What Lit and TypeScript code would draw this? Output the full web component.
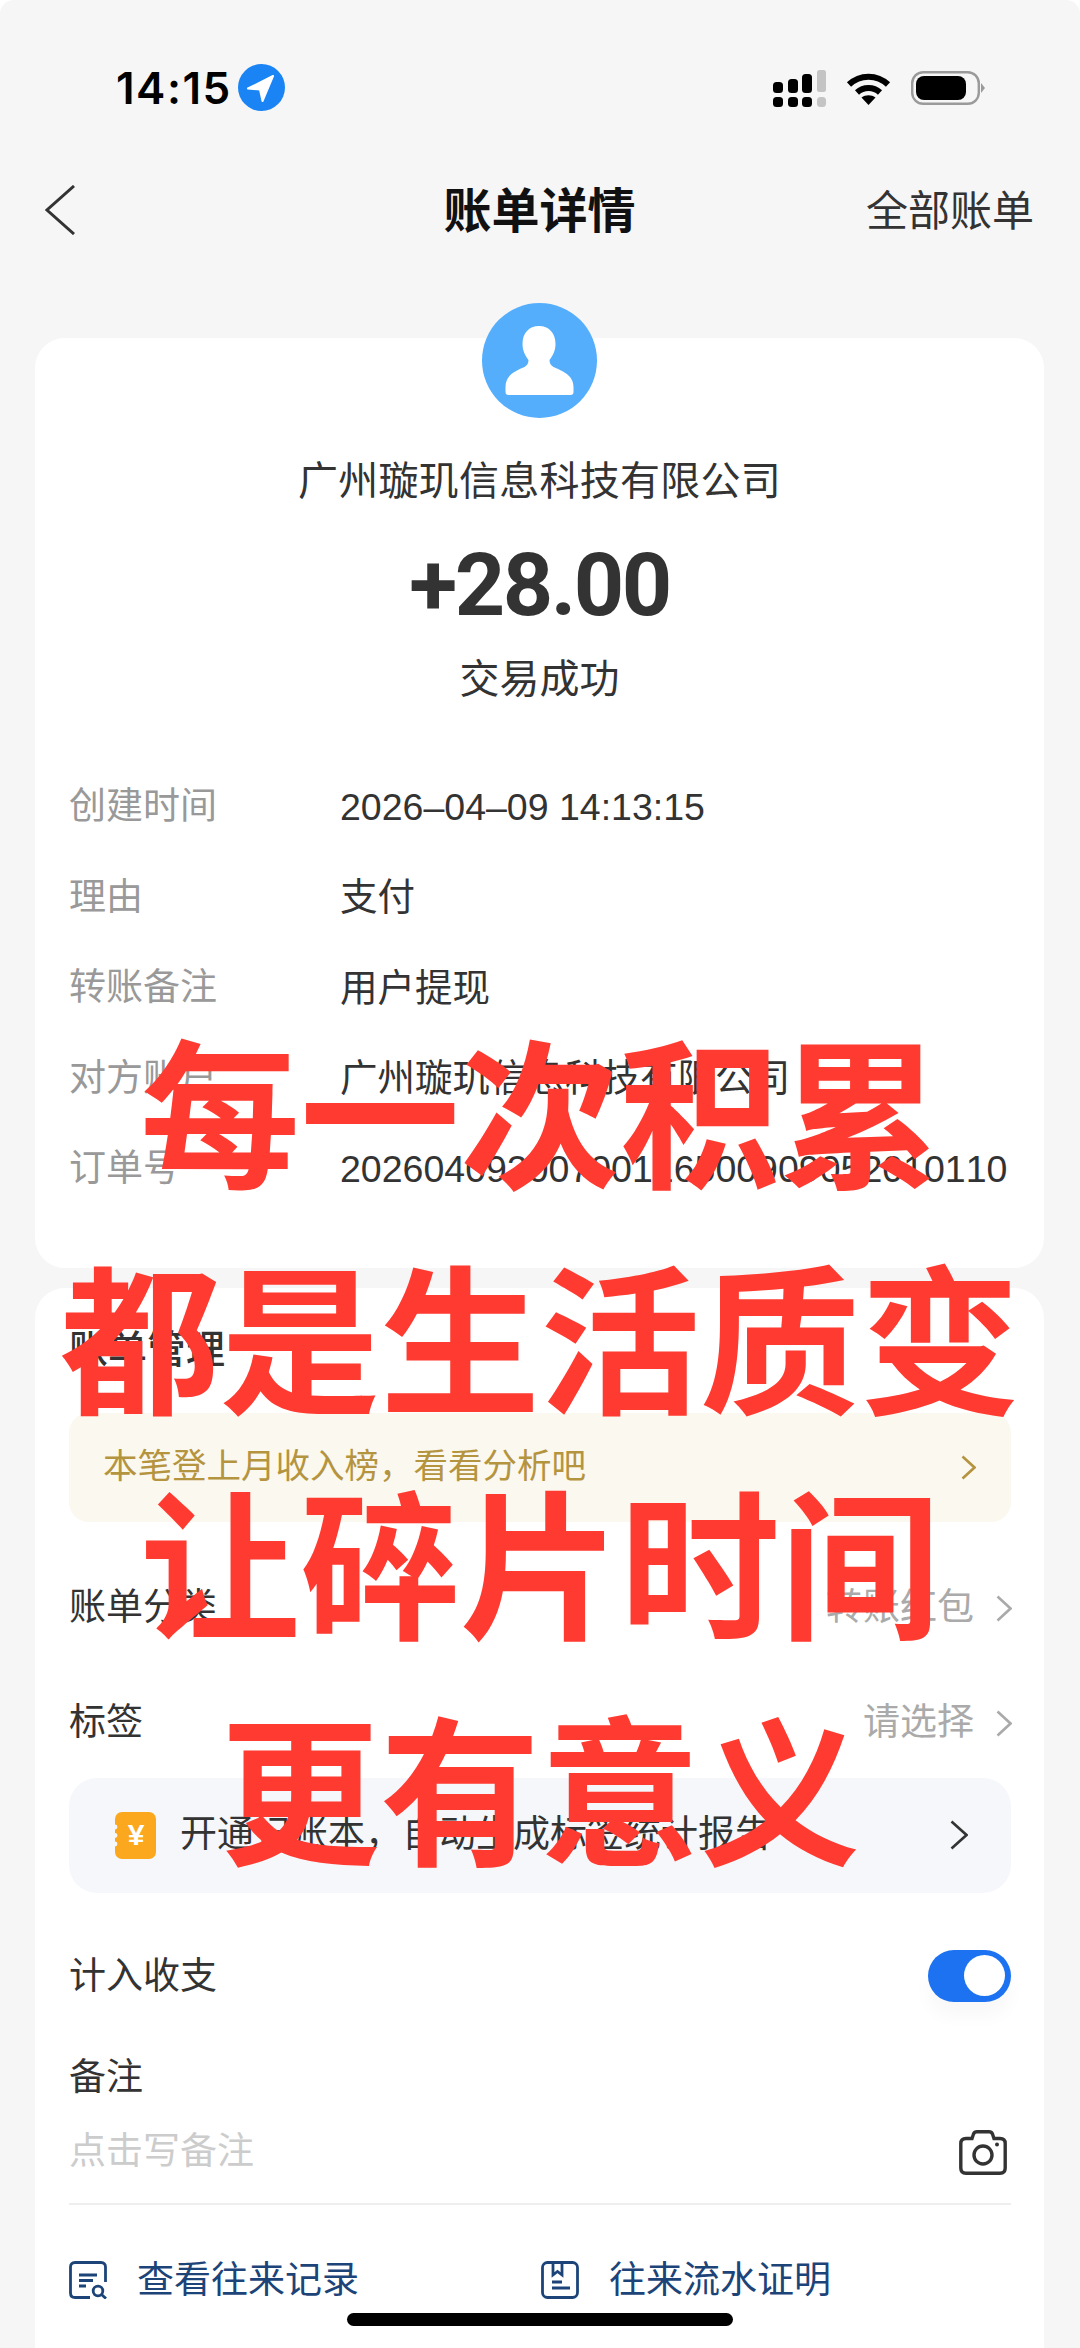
import { LitElement, css, html, svg } from 'lit'
import { customElement } from 'lit/decorators.js'

const details = [
  ['创建时间', '2026–04–09 14:13:15'],
  ['理由', '支付'],
  ['转账备注', '用户提现'],
  ['对方账户', '广州璇玑信息科技有限公司'],
  ['订单号', '20260409200700116500909052010110'],
]

const overlayLines = ['每一次积累', '都是生活质变', '让碎片时间', '更有意义']

const chevron = (w: number, h: number, cls: string) => html`
  <svg class="chev ${cls}" width=${w} height=${h} viewBox="0 0 ${w} ${h}" fill="none">
    <path d="M1.5 1.5 L${w - 1.5} ${h / 2} L1.5 ${h - 1.5}" stroke="currentColor" stroke-width="2.6" />
  </svg>
`

const signal = svg`
  <rect x="0" y="27" width="10" height="10" rx="3.5" fill="#000" />
  <rect x="15" y="27" width="10" height="10" rx="3.5" fill="#000" />
  <rect x="29" y="27" width="10" height="10" rx="3.5" fill="#000" />
  <rect x="44" y="27" width="9" height="10" rx="3.5" fill="#c4c4c4" />
  <rect x="0" y="12" width="10" height="11" rx="3.5" fill="#000" />
  <rect x="15" y="9" width="10" height="14" rx="3.5" fill="#000" />
  <rect x="29" y="4" width="10" height="19" rx="3.5" fill="#000" />
  <rect x="44" y="0" width="9" height="22" rx="2.5" fill="#c4c4c4" />
`

@customElement('app-root')
export class AppRoot extends LitElement {
  render() {
    return html`
      <div class="page">
        <div class="status">
          <div class="clock">
            <span class="time">14:15</span>
            <svg width="47" height="47" viewBox="0 0 47 47">
              <circle cx="23.5" cy="23.5" r="23.5" fill="#1a84f4" />
              <path d="M35 12 L10 24.5 L22 25.5 L24.5 37 Z" fill="#fff" stroke="#fff" stroke-width="2" stroke-linejoin="round" />
            </svg>
          </div>
          <div class="sys">
            <svg width="53" height="37" viewBox="0 0 53 37">${signal}</svg>
            <svg class="wifi" width="45" height="33" viewBox="0 0 45 33" fill="none">
              <path d="M3 12.5 C14 2 31 2 42 12.5" stroke="#000" stroke-width="6" />
              <path d="M11 20.5 C17.5 14.5 27.5 14.5 34 20.5" stroke="#000" stroke-width="6" />
              <path d="M22.5 33 L15.5 25.5 C19.5 22.5 25.5 22.5 29.5 25.5 Z" fill="#000" />
            </svg>
            <svg class="batt" width="74" height="34" viewBox="0 0 74 34">
              <rect x="1.2" y="1.2" width="66.6" height="31.6" rx="11" fill="none" stroke="#9a9a9a" stroke-width="2.4" />
              <rect x="5" y="5" width="50" height="24" rx="8" fill="#000" />
              <path d="M70 12 L74 17 L70 22 Z" fill="#9a9a9a" />
            </svg>
          </div>
        </div>

        <div class="nav">
          <svg class="back" width="30" height="50" viewBox="0 0 30 50" fill="none">
            <path d="M29 1 L2 25 L29 49" stroke="#333" stroke-width="3" />
          </svg>
          <div class="title">账单详情</div>
          <div class="all">全部账单</div>
        </div>

        <section class="card summary">
          <svg class="avatar" width="115" height="115" viewBox="0 0 115 115">
            <circle cx="57.5" cy="57.5" r="57.5" fill="#55aefc" />
            <path fill="#fff" d="M57 23 C67 23 73.500 30 73.500 41 C73.500 48 70.500 53 67.500 57 C67.500 60 68.500 62 71.500 64 C80.500 68 91.500 72 91.500 84 L91.500 89 Q91.500 92 88.500 92 L26.500 92 Q23.500 92 23.500 89 L23.500 84 C23.500 72 33.500 68 42.500 64 C45.500 62 46.500 60 46.500 57 C43.500 53 40.500 48 40.500 41 C40.500 30 47 23 57 23 Z" />
          </svg>
          <div class="payee">广州璇玑信息科技有限公司</div>
          <div class="amount">+28.00</div>
          <div class="result">交易成功</div>
          <div class="details">
            ${details.map(([k, v]) => html`
              <div class="detail"><span class="key">${k}</span><span class="val">${v}</span></div>
            `)}
          </div>
        </section>

        <section class="card manage">
          <div class="heading">账单管理</div>
          <div class="tip">
            <span>本笔登上月收入榜，看看分析吧</span>
            ${chevron(15, 25, 'gold')}
          </div>
          <div class="row first">
            <span>账单分类</span>
            <span class="pick">转账红包${chevron(16, 27, 'grey')}</span>
          </div>
          <div class="row second">
            <span>标签</span>
            <span class="pick">请选择${chevron(16, 27, 'grey')}</span>
          </div>
          <div class="promo">
            <svg width="41" height="47" viewBox="0 0 41 47">
              <rect width="41" height="47" rx="7" fill="#fba81e" />
              <circle cx="0" cy="15" r="2.4" fill="#f5f7fa" />
              <circle cx="0" cy="23.500" r="2.4" fill="#f5f7fa" />
              <circle cx="0" cy="32" r="2.4" fill="#f5f7fa" />
              <text x="21" y="33" text-anchor="middle" class="yen">¥</text>
            </svg>
            <span class="promo-text">开通记账本，自动生成标签统计报告</span>
            ${chevron(18, 30, 'dark')}
          </div>
          <div class="switch-row">
            <span class="switch-label">计入收支</span>
            <div class="toggle"><div class="knob"></div></div>
          </div>
          <div class="note-label">备注</div>
          <div class="note">
            <span class="placeholder">点击写备注</span>
            <svg class="camera" width="48" height="45" viewBox="0 0 48 45" fill="none" stroke="#333" stroke-width="3.4">
              <path d="M7 8.500 H13 L14.500 4 Q15.500 1.800 18 1.800 H30 Q32.500 1.800 33.500 4 L35 8.500 H41 Q46.200 8.500 46.200 13.500 V38 Q46.200 43.200 41 43.200 H7 Q1.800 43.200 1.800 38 V13.500 Q1.800 8.500 7 8.500 Z" />
              <circle cx="24" cy="25" r="9" />
              <circle cx="38" cy="14.500" r="2" fill="#333" stroke="none" />
            </svg>
          </div>
          <div class="rule"></div>
          <div class="links">
            <div class="link">
              <svg width="38" height="38" viewBox="0 0 38 38" fill="none" stroke="#1c4478" stroke-width="2.8">
                <path d="M36.500 21 V6 Q36.500 1.500 32 1.500 H6 Q1.500 1.500 1.500 6 V32 Q1.500 36.500 6 36.500 H21" />
                <path d="M10 14 H28 M10 19.500 H24 M10 25 H17" />
                <circle cx="29" cy="30" r="4.800" />
                <path d="M32.500 33.500 L37 37.500" />
              </svg>
              <span class="link-text">查看往来记录</span>
            </div>
            <div class="link">
              <svg width="38" height="38" viewBox="0 0 38 38" fill="none" stroke="#1c4478" stroke-width="2.8">
                <rect x="1.500" y="1.500" width="35" height="35" rx="5" />
                <path d="M12 2 V14 L16.500 10.500 L21 14 V2" />
                <path d="M11 21 H21 M11 27 H29" />
              </svg>
              <span class="link-text">往来流水证明</span>
            </div>
          </div>
        </section>

        <div class="overlay">
          ${overlayLines.map((line) => html`<div class="shout">${line}</div>`)}
        </div>
        <div class="home"></div>
      </div>
    `
  }

  static styles = css`
    :host {
      display: block;
      font-family: "Liberation Sans", "Noto Sans CJK SC", sans-serif;
      line-height: 1.2;
      color: #333;
    }

    .page {
      position: relative;
      width: 1080px;
      height: 2348px;
      overflow: hidden;
      background: #f6f6f6;
      border-radius: 14px 14px 0 0;
    }

    .status {
      height: 176px;
      padding: 0 95px 0 116px;
      box-sizing: border-box;
      display: flex;
      align-items: center;
      justify-content: space-between;
    }

    .clock {
      display: flex;
      align-items: center;
      gap: 6px;
    }

    .time {
      font-family: Inter, sans-serif;
      font-size: 44px;
      font-weight: 600;
      color: #000;
      letter-spacing: 1.5px;
    }

    .sys {
      display: flex;
      align-items: center;
      gap: 20px;
    }

    .nav {
      height: 68px;
      margin-bottom: 94px;
      padding: 0 46px 0 45px;
      display: grid;
      grid-template-columns: 1fr auto 1fr;
      align-items: center;
    }

    .title {
      padding-top: 4px;
      font-size: 48px;
      font-weight: 700;
      color: #111;
    }

    .all {
      justify-self: end;
      padding-top: 4px;
      font-size: 42px;
      color: #333;
    }

    .card {
      margin: 0 36px 0 35px;
      background: #fff;
      border-radius: 30px;
    }

    .summary {
      display: flex;
      flex-direction: column;
      align-items: center;
      padding-bottom: 53px;
    }

    .avatar {
      margin-top: -35px;
    }

    .payee {
      margin-top: 38px;
      height: 50px;
      line-height: 50px;
      font-size: 40px;
      letter-spacing: 0.25px;
    }

    .amount {
      margin-top: 29px;
      height: 100px;
      line-height: 100px;
      font-family: Roboto, sans-serif;
      font-size: 88px;
      font-weight: 700;
      letter-spacing: -2.5px;
      color: #333;
    }

    .result {
      margin-top: 19px;
      height: 50px;
      line-height: 50px;
      font-size: 40px;
    }

    .details {
      align-self: stretch;
      margin-top: 58px;
      padding-left: 34px;
    }

    .detail {
      height: 90.500px;
      display: flex;
      align-items: center;
      font-size: 37px;
    }

    .key {
      width: 271px;
      color: #999;
    }

    .val {
      color: #333;
      font-size: 37.500px;
      font-kerning: none;
      white-space: nowrap;
    }

    .manage {
      margin-top: 20px;
      height: 1200px;
      padding: 37px 33px 0 34px;
      box-sizing: border-box;
      font-size: 37px;
    }

    .heading {
      height: 50px;
      line-height: 50px;
      font-size: 39px;
      font-weight: 500;
    }

    .tip {
      margin-top: 38px;
      height: 109px;
      padding: 0 35px 0 34px;
      display: flex;
      align-items: center;
      justify-content: space-between;
      background: #fbf8ef;
      border-radius: 20px;
      color: #b59440;
      font-size: 34.500px;
    }

    .row {
      height: 90px;
      display: flex;
      align-items: center;
      justify-content: space-between;
    }

    .row.first {
      margin-top: 42px;
    }

    .row.second {
      margin-top: 25px;
    }

    .pick {
      display: flex;
      align-items: center;
      gap: 22px;
      color: #aaa;
      margin-right: -1px;
    }

    .chev {
      display: block;
      flex: none;
    }

    .gold {
      color: #b59440;
    }

    .grey {
      color: #aaa;
    }

    .dark {
      color: #333;
    }

    .promo {
      margin-top: 9px;
      height: 115px;
      padding: 0 43px 0 46px;
      display: flex;
      align-items: center;
      background: #f5f7fa;
      border-radius: 28px;
    }

    .promo-text {
      flex: 1;
      margin-left: 24px;
    }

    .yen {
      font-size: 30px;
      font-weight: 700;
      fill: #fff;
    }

    .switch-row {
      margin-top: 43px;
      height: 80px;
      display: flex;
      align-items: center;
      justify-content: space-between;
    }

    .switch-label {
      padding-top: 3px;
    }

    .toggle {
      width: 83px;
      height: 52px;
      padding: 5px 6px;
      box-sizing: border-box;
      display: flex;
      justify-content: flex-end;
      background: #1c72f0;
      border-radius: 26px;
      box-shadow: 0 14px 18px rgba(0, 0, 0, 0.03);
    }

    .knob {
      width: 41px;
      height: 41px;
      border-radius: 50%;
      background: #fff;
    }

    .note-label {
      margin-top: 32px;
      height: 60px;
      line-height: 60px;
    }

    .note {
      margin-top: 15px;
      height: 60px;
      display: flex;
      align-items: center;
      justify-content: space-between;
    }

    .camera {
      margin-right: 4px;
    }

    .placeholder {
      color: #ccc;
    }

    .rule {
      margin-top: 20px;
      height: 2px;
      background: #eee;
    }

    .links {
      margin-top: 50px;
      display: grid;
      grid-template-columns: 1fr 1fr;
      gap: 2px;
    }

    .link {
      height: 50px;
      display: flex;
      align-items: center;
      gap: 30px;
      color: #1c4478;
    }

    .link-text {
      padding-top: 3px;
    }

    .overlay {
      position: absolute;
      top: 1008px;
      left: 0;
      right: 0;
      display: grid;
      grid-auto-rows: 225.700px;
      justify-items: center;
      align-items: center;
      pointer-events: none;
    }

    .shout {
      font-size: 160px;
      line-height: 1;
      font-weight: 700;
      color: #ff3a30;
      white-space: nowrap;
    }

    .home {
      position: absolute;
      left: 347px;
      bottom: 22px;
      width: 386px;
      height: 13px;
      border-radius: 7px;
      background: #000;
    }
  `
}
